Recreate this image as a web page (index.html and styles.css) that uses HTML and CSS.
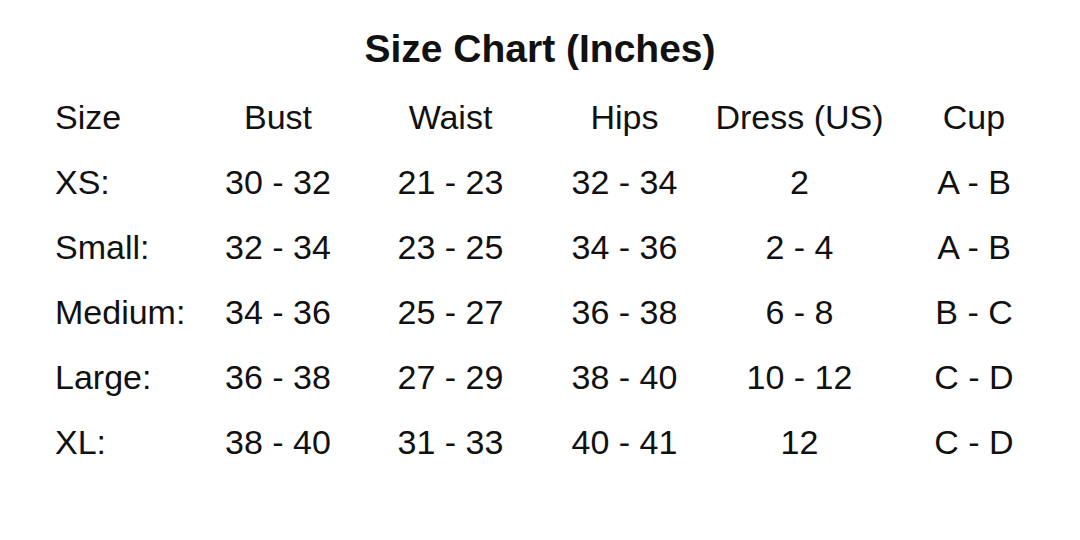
FILE: index.html
```html
<!DOCTYPE html>
<html>
<head>
<meta charset="utf-8">
<link rel="stylesheet" href="styles.css">
</head>
<body>
<main class="chart">
  <h1 class="title">Size Chart (Inches)</h1>
  <div class="table">
    <div class="cell first">Size</div><div class="cell">Bust</div><div class="cell">Waist</div><div class="cell">Hips</div><div class="cell">Dress (US)</div><div class="cell">Cup</div>
    <div class="cell first">XS:</div><div class="cell">30 - 32</div><div class="cell">21 - 23</div><div class="cell">32 - 34</div><div class="cell">2</div><div class="cell">A - B</div>
    <div class="cell first">Small:</div><div class="cell">32 - 34</div><div class="cell">23 - 25</div><div class="cell">34 - 36</div><div class="cell">2 - 4</div><div class="cell">A - B</div>
    <div class="cell first">Medium:</div><div class="cell">34 - 36</div><div class="cell">25 - 27</div><div class="cell">36 - 38</div><div class="cell">6 - 8</div><div class="cell">B - C</div>
    <div class="cell first">Large:</div><div class="cell">36 - 38</div><div class="cell">27 - 29</div><div class="cell">38 - 40</div><div class="cell">10 - 12</div><div class="cell">C - D</div>
    <div class="cell first">XL:</div><div class="cell">38 - 40</div><div class="cell">31 - 33</div><div class="cell">40 - 41</div><div class="cell">12</div><div class="cell">C - D</div>
  </div>
</main>
</body>
</html>
```
FILE: styles.css
```css
html, body {
  margin: 0;
  padding: 0;
  background: #ffffff;
}
body {
  width: 1080px;
  height: 540px;
  overflow: hidden;
  font-family: "Liberation Sans", Arial, sans-serif;
  color: #111111;
}
.chart {
  padding-top: 27px;
}
.title {
  margin: 0;
  font-size: 39px;
  line-height: 44px;
  font-weight: 700;
  text-align: center;
}
.table {
  margin-top: 14px;
  padding-left: 55px;
  display: grid;
  grid-template-columns: 137px 172px 173px 175px 175px 174px;
  grid-auto-rows: 65px;
  font-size: 34px;
  line-height: 65px;
}
.cell {
  text-align: center;
  white-space: nowrap;
}
.cell.first {
  text-align: left;
}
```
